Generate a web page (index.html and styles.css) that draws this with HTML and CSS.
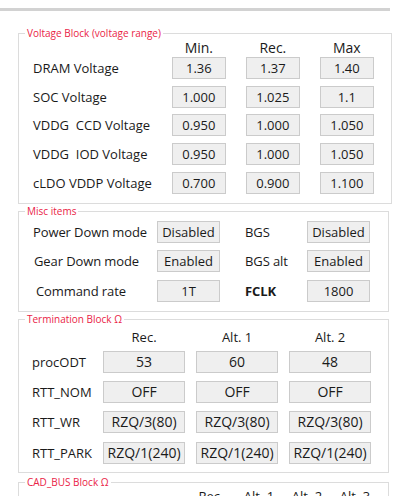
FILE: index.html
```html
<!DOCTYPE html>
<html lang="en">
<head>
    <meta charset="UTF-8">
    <meta name="viewport" content="width=device-width, initial-scale=1.0">
    <title>Memory settings</title>
    <link rel="stylesheet" href="styles.css">
</head>
<body>
    <div class="topbar"></div>
    <div class="page">
        <!-- voltage -->
        <fieldset class="block volt">
            <legend>Voltage Block (voltage range)</legend>
            <div class="rows">
                <div class="row head"><span></span><span>Min.</span><span>Rec.</span><span>Max</span></div>
                <div class="row"><span class="lbl">DRAM Voltage</span><span class="val">1.36</span><span class="val">1.37</span><span class="val">1.40</span></div>
                <div class="row"><span class="lbl">SOC Voltage</span><span class="val">1.000</span><span class="val">1.025</span><span class="val">1.1</span></div>
                <div class="row"><span class="lbl">VDDG&nbsp; CCD Voltage</span><span class="val">0.950</span><span class="val">1.000</span><span class="val">1.050</span></div>
                <div class="row"><span class="lbl">VDDG&nbsp; IOD Voltage</span><span class="val">0.950</span><span class="val">1.000</span><span class="val">1.050</span></div>
                <div class="row"><span class="lbl">cLDO VDDP Voltage</span><span class="val">0.700</span><span class="val">0.900</span><span class="val">1.100</span></div>
            </div>
        </fieldset>

        <!-- misc -->
        <fieldset class="block misc">
            <legend>Misc items</legend>
            <div class="rows">
                <div class="row"><span class="lbl">Power Down mode</span><span class="val">Disabled</span><span class="lbl lbl2">BGS</span><span class="val">Disabled</span></div>
                <div class="row"><span class="lbl in1">Gear Down mode</span><span class="val">Enabled</span><span class="lbl lbl2">BGS alt</span><span class="val">Enabled</span></div>
                <div class="row"><span class="lbl in2">Command rate</span><span class="val">1T</span><span class="lbl lbl2 bold">FCLK</span><span class="val">1800</span></div>
            </div>
        </fieldset>

        <!-- termination -->
        <fieldset class="block term">
            <legend>Termination Block Ω</legend>
            <div class="rows">
                <div class="row head"><span></span><span>Rec.</span><span>Alt. 1</span><span>Alt. 2</span></div>
                <div class="row"><span class="lbl">procODT</span><span class="val">53</span><span class="val">60</span><span class="val">48</span></div>
                <div class="row"><span class="lbl">RTT_NOM</span><span class="val">OFF</span><span class="val">OFF</span><span class="val">OFF</span></div>
                <div class="row"><span class="lbl">RTT_WR</span><span class="val">RZQ/3(80)</span><span class="val">RZQ/3(80)</span><span class="val">RZQ/3(80)</span></div>
                <div class="row"><span class="lbl">RTT_PARK</span><span class="val">RZQ/1(240)</span><span class="val">RZQ/1(240)</span><span class="val">RZQ/1(240)</span></div>
            </div>
        </fieldset>

        <!-- cad bus -->
        <fieldset class="block cad">
            <legend>CAD_BUS Block Ω</legend>
            <div class="rows">
                <div class="row head"><span></span><span>Rec.</span><span>Alt. 1</span><span>Alt. 2</span><span>Alt. 3</span></div>
            </div>
        </fieldset>
    </div>
</body>
</html>
```

FILE: styles.css
```css
*{
    margin: 0;
    padding: 0;
    box-sizing: border-box;
}
html{
    overflow: hidden;
}
body{
    background: #fff;
    color: #1a1a1a;
    font-family: "Open Sans", "Noto Sans", sans-serif;
    font-size: 13px;
}

.topbar{
    width: 390px;
    height: 3px;
    margin-top: 8px;
    background: #d2d2d2;
}
.page{
    width: 389px;
    padding-left: 18px;
}

/* group boxes */
.block{
    border: 1px solid #dcdcdc;
    margin-top: 1px;
}
.volt{
    margin-top: 16px;
}
.cad{
    margin-top: 3px;
}
.block legend{
    margin-left: 6px;
    padding: 0 2px;
    height: 13px;
    line-height: 13px;
    font-size: 10px;
    color: #ea2346;
}

.rows{
    display: flex;
    flex-direction: column;
}
.row{
    display: grid;
    align-items: center;
}
.head{
    height: 15px;
    line-height: 15px;
    text-align: center;
}
.lbl{
    white-space: nowrap;
}
.val{
    height: 22px;
    line-height: 20px;
    border: 1px solid #cbcbcb;
    background: #efefef;
    text-align: center;
    white-space: nowrap;
}
.bold{
    font-weight: 700;
}

/* voltage */
.volt .rows{
    padding: 0 17px 9px 14px;
}
.volt .row{
    grid-template-columns: 1fr 54px 54px 54px;
    column-gap: 20px;
}
.volt .head{
    margin-bottom: 2px;
    font-size: 14px;
}
.volt .row + .row + .row{
    margin-top: 6.7px;
}

/* misc */
.misc .rows{
    padding: 3px 18px 9px 14px;
    gap: 7.5px;
}
.misc .row{
    grid-template-columns: 124px 63px 1fr 63px;
}
.misc .lbl{
    letter-spacing: -0.1px;
}
.misc .in1{
    padding-left: 1px;
}
.misc .in2{
    padding-left: 3px;
}
.misc .lbl2{
    padding-left: 25px;
}

/* termination */
.term .rows{
    padding: 4px 17px 8px 13px;
}
.term .row{
    grid-template-columns: 1fr 82px 82px 82px;
    column-gap: 11px;
}
.term .val{
    font-size: 14px;
}
.term .head{
    margin-bottom: 6px;
}
.term .row + .row + .row{
    margin-top: 8.3px;
}

/* cad bus */
.cad .rows{
    padding: 0 11px 20px 14px;
}
.cad .row{
    grid-template-columns: 1fr 44px 44px 44px 44px;
    column-gap: 4px;
}
```
